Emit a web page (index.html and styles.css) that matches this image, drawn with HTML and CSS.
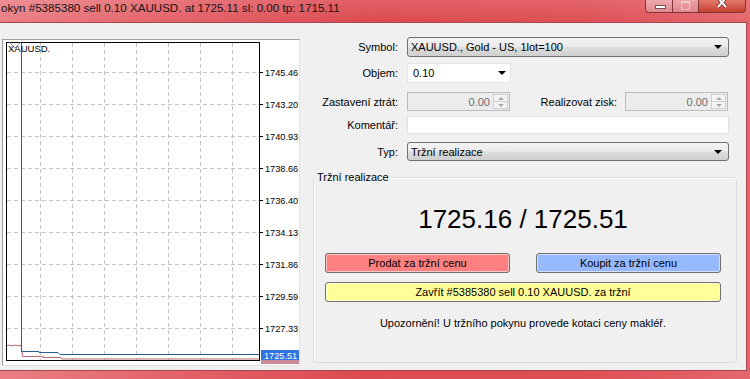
FILE: index.html
```html
<!DOCTYPE html>
<html lang="cs">

<head>
    <meta charset="UTF-8">
    <meta name="viewport" content="width=device-width, initial-scale=1.0">
    <title>Pokyn #5385380</title>
    <link rel="stylesheet" href="styles.css">
</head>

<body>
    <div class="window">
        <div class="titlebar">
            <span class="title">okyn #5385380 sell 0.10 XAUUSD. at 1725.11 sl: 0.00 tp: 1715.11</span>
            <div class="caption-buttons">
                <span class="cap-btn cap-min"></span>
                <span class="cap-btn cap-max"></span>
                <span class="cap-btn cap-close">
                    <svg width="14" height="9" viewBox="0 0 14 9">
                        <path d="M3 -2 L11 7 M11 -2 L3 7" stroke="#6b2a22" stroke-width="3.4" />
                        <path d="M3 -2 L11 7 M11 -2 L3 7" stroke="#ffffff" stroke-width="2" />
                    </svg>
                </span>
            </div>
        </div>

        <div class="client">
            <!-- tick chart -->
            <div class="chart-panel">
                <svg class="chart" width="296" height="325" viewBox="0 0 296 325">
                    <g stroke="#c4c4c4" stroke-dasharray="4,3" stroke-width="1">
                        <path d="M37.5 3 V320 M69.5 3 V320 M101.5 3 V320 M133.5 3 V320 M165.5 3 V320 M197.5 3 V320 M229.5 3 V320" />
                        <path d="M4 32.5 H256 M4 64.5 H256 M4 96.5 H256 M4 128.5 H256 M4 160.5 H256 M4 192.5 H256 M4 224.5 H256 M4 256.5 H256 M4 288.5 H256" />
                    </g>
                    <g stroke="#000" stroke-width="1">
                        <path d="M256 32.5 H260 M256 64.5 H260 M256 96.5 H260 M256 128.5 H260 M256 160.5 H260 M256 192.5 H260 M256 224.5 H260 M256 256.5 H260 M256 288.5 H260" />
                    </g>
                    <g class="axis">
                        <text x="262" y="36">1745.46</text>
                        <text x="262" y="68">1743.20</text>
                        <text x="262" y="100">1740.93</text>
                        <text x="262" y="132">1738.66</text>
                        <text x="262" y="164">1736.40</text>
                        <text x="262" y="196">1734.13</text>
                        <text x="262" y="228">1731.86</text>
                        <text x="262" y="260">1729.59</text>
                        <text x="262" y="292">1727.33</text>
                    </g>
                    <rect x="258" y="320" width="38" height="4" fill="#c98a9a" />
                    <rect x="258" y="310" width="38" height="10" fill="#2f74e0" />
                    <text class="axis-tag" x="261" y="318.5">1725.51</text>
                    <polyline points="3,306 6,305 9,306 12,305 15,306 17,305 18.5,307 19.5,316.5 40,316.5 40,317.5 58,317.5 59,319 256,319" fill="none" stroke="#b86a6e" stroke-width="1" />
                    <polyline points="18.5,2 18.5,311.5 36,311.5 36,312.5 55,312.5 57,314.5 256,314.5" fill="none" stroke="#2a5f8c" stroke-width="1" />
                    <rect x="3.5" y="2.5" width="253" height="318" fill="none" stroke="#000" stroke-width="1" />
                    <polyline points="6,2 12,8 18,2" fill="none" stroke="#6f8aa6" stroke-width="0.8" />
                    <text class="chart-symbol" x="5" y="12">XAUUSD.</text>
                </svg>
            </div>

            <!-- order form -->
            <div class="order-form">
                <div class="row row-symbol">
                    <span class="lbl">Symbol:</span>
                    <div class="combo combo-wide"><span>XAUUSD., Gold - US, 1lot=100</span><i class="arrow"></i></div>
                </div>
                <div class="row row-volume">
                    <span class="lbl">Objem:</span>
                    <div class="edit-combo"><span>0.10</span><i class="arrow"></i></div>
                </div>
                <div class="row row-stops">
                    <span class="lbl">Zastavení ztrát:</span>
                    <div class="spin-field">
                        <span class="spin-val">0.00</span>
                        <span class="spinner"><i class="up"></i><i class="down"></i></span>
                    </div>
                    <span class="lbl lbl-tp">Realizovat zisk:</span>
                    <div class="spin-field">
                        <span class="spin-val">0.00</span>
                        <span class="spinner"><i class="up"></i><i class="down"></i></span>
                    </div>
                </div>
                <div class="row row-comment">
                    <span class="lbl">Komentář:</span>
                    <div class="text-field"></div>
                </div>
                <div class="row row-type">
                    <span class="lbl">Typ:</span>
                    <div class="combo combo-wide"><span>Tržní realizace</span><i class="arrow"></i></div>
                </div>

                <div class="group">
                    <span class="group-title">Tržní realizace</span>
                    <div class="quote">1725.16 / 1725.51</div>
                    <div class="trade-buttons">
                        <button class="btn btn-sell">Prodat za tržní cenu</button>
                        <button class="btn btn-buy">Koupit za tržní cenu</button>
                    </div>
                    <button class="btn btn-close">Zavřít #5385380 sell 0.10 XAUUSD. za tržní</button>
                    <p class="notice">Upozornění! U tržního pokynu provede kotaci ceny makléř.</p>
                </div>
            </div>
        </div>
    </div>
</body>

</html>
```

FILE: styles.css
```css
body {
    margin: 0;
    font-family: "Liberation Sans", Arial, sans-serif;
    font-size: 11px;
    color: #000;
}

.window {
    width: 750px;
    height: 379px;
    display: flex;
    flex-direction: column;
    overflow: hidden;
    background: linear-gradient(90deg, #ea7f85 0%, #e4636a 22%, #dc4b51 48%, #de4f55 78%, #e4676d 100%);
}

/* title bar */
.titlebar {
    height: 22px;
    flex: none;
    display: flex;
    justify-content: space-between;
    align-items: flex-start;
    padding-right: 4px;
    background: linear-gradient(rgba(255, 255, 255, 0.12), rgba(255, 255, 255, 0));
}

.title {
    font-size: 11.6px;
    line-height: 16px;
    padding-left: 1px;
    color: #151515;
}

.caption-buttons {
    display: flex;
}

.cap-btn {
    height: 13px;
    box-sizing: border-box;
    border: 1px solid #843338;
    border-top: none;
    display: flex;
    justify-content: center;
    position: relative;
}

.cap-min {
    width: 28px;
    border-radius: 0 0 0 4px;
    background: linear-gradient(#efabaf, #e08a90);
}

.cap-min::after {
    content: "";
    position: absolute;
    left: 9px;
    top: 5px;
    width: 9px;
    height: 2px;
    background: #fff;
    border: 1px solid #7a4a4e;
}

.cap-max {
    width: 26px;
    border-left: none;
    background: linear-gradient(#eda5aa, #df868c);
}

.cap-max::after {
    content: "";
    position: absolute;
    left: 8px;
    top: 1px;
    width: 7px;
    height: 6px;
    border: 1px solid rgba(255, 255, 255, 0.45);
    border-top-width: 2px;
}

.cap-close {
    width: 47px;
    border-left: none;
    border-radius: 0 0 4px 0;
    background: linear-gradient(#e27a6c, #c6402f);
}

/* client area */
.client {
    flex: none;
    height: 349px;
    width: 747px;
    box-sizing: border-box;
    display: flex;
    background: #f0f0f0;
    border: 1px solid #a4464b;
    border-left: none;
}

.chart-panel {
    flex: none;
    width: 298px;
    height: 327px;
    margin: 16px 0 0 2px;
    box-sizing: border-box;
    background: #fff;
    border: 1px solid;
    border-color: #a0a0a0 #e2e2e2 #e2e2e2 #a0a0a0;
}

.chart {
    display: block;
}

.axis text {
    font-family: "Liberation Sans", Arial, sans-serif;
    font-size: 9.2px;
    fill: #000;
}

.axis-tag {
    font-family: "Liberation Sans", Arial, sans-serif;
    font-size: 9.2px;
    fill: #fff;
}

.chart-symbol {
    font-family: "Liberation Sans", Arial, sans-serif;
    font-size: 9.5px;
    fill: #000;
}

/* form */
.order-form {
    flex: 1;
    margin-left: 10px;
    padding-top: 14px;
    display: flex;
    flex-direction: column;
}

.row {
    display: flex;
    align-items: center;
    padding-right: 17px;
}

.row-symbol {
    height: 20px;
}

.row-volume {
    height: 20px;
    margin-top: 6px;
}

.row-stops {
    height: 19px;
    margin-top: 9px;
    padding-right: 18px;
}

.row-comment {
    height: 18px;
    margin-top: 5px;
}

.row-type {
    height: 19px;
    margin-top: 8px;
}

.lbl {
    flex: none;
    width: 97px;
    padding-right: 9px;
    box-sizing: border-box;
    text-align: right;
    white-space: nowrap;
}

.lbl-tp {
    flex: 1;
    width: auto;
    padding-right: 8px;
}

.combo,
.edit-combo,
.spin-field,
.text-field {
    height: 100%;
    box-sizing: border-box;
    display: flex;
    align-items: center;
}

.combo {
    flex: 1;
    padding: 0 6px 0 3px;
    border: 1px solid #707070;
    border-radius: 3px;
    background: linear-gradient(#f3f3f3 0%, #ebebeb 48%, #dddddd 52%, #cfcfcf 100%);
}

.combo span,
.edit-combo span {
    flex: 1;
}

.arrow {
    width: 0;
    height: 0;
    border-left: 4px solid transparent;
    border-right: 4px solid transparent;
    border-top: 4px solid #000;
}

.edit-combo {
    width: 104px;
    padding: 0 4px 0 5px;
    background: #fff;
    border: 1px solid #e4e4e4;
}

.spin-field {
    width: 103px;
    background: #ececec;
    border: 1px solid #bcbcbc;
    justify-content: flex-end;
    padding: 1px;
}

.spin-val {
    flex: 1;
    text-align: right;
    padding-right: 3px;
    color: #6d6d6d;
}

.spinner {
    width: 15px;
    height: 100%;
    box-sizing: border-box;
    border: 1px solid #cfcfcf;
    background: #f4f4f4;
    display: flex;
    flex-direction: column;
}

.spinner i {
    flex: 1;
    display: flex;
    align-items: center;
    justify-content: center;
}

.spinner .up {
    border-bottom: 1px solid #cfcfcf;
}

.spinner .up::after,
.spinner .down::after {
    content: "";
    border-left: 3px solid transparent;
    border-right: 3px solid transparent;
}

.spinner .up::after {
    border-bottom: 3px solid #a8a8a8;
}

.spinner .down::after {
    border-top: 3px solid #a8a8a8;
}

.text-field {
    flex: 1;
    background: #fff;
    border: 1px solid #e2e2e2;
}

/* market execution group */
.group {
    position: relative;
    flex: 1;
    margin: 16px 9px 7px 3px;
    padding: 0 15px 0 11px;
    border: 1px solid #d9dde0;
    border-radius: 3px;
    box-shadow: inset 1px 1px 0 #fff;
    display: flex;
    flex-direction: column;
}

.group-title {
    position: absolute;
    left: 1px;
    top: -7px;
    padding: 0 2px;
    line-height: 13px;
    background: #f0f0f0;
}

.quote {
    margin-top: 26px;
    font-size: 26px;
    line-height: 30px;
    text-align: center;
}

.trade-buttons {
    display: flex;
    justify-content: space-between;
    margin-top: 19px;
}

.btn {
    height: 20px;
    padding: 0;
    font-family: inherit;
    font-size: 11px;
    color: #000;
    border: 1px solid #707070;
    border-radius: 3px;
    box-shadow: inset 0 0 0 1px rgba(255, 255, 255, 0.55);
}

.btn-sell,
.btn-buy {
    width: 185px;
}

.btn-sell {
    background: #ff8080;
}

.btn-buy {
    background: #97b9ff;
}

.btn-close {
    margin-top: 9px;
    background: #ffff99;
}

.notice {
    margin: 14px 0 0;
    line-height: 14px;
    text-align: center;
}
```
